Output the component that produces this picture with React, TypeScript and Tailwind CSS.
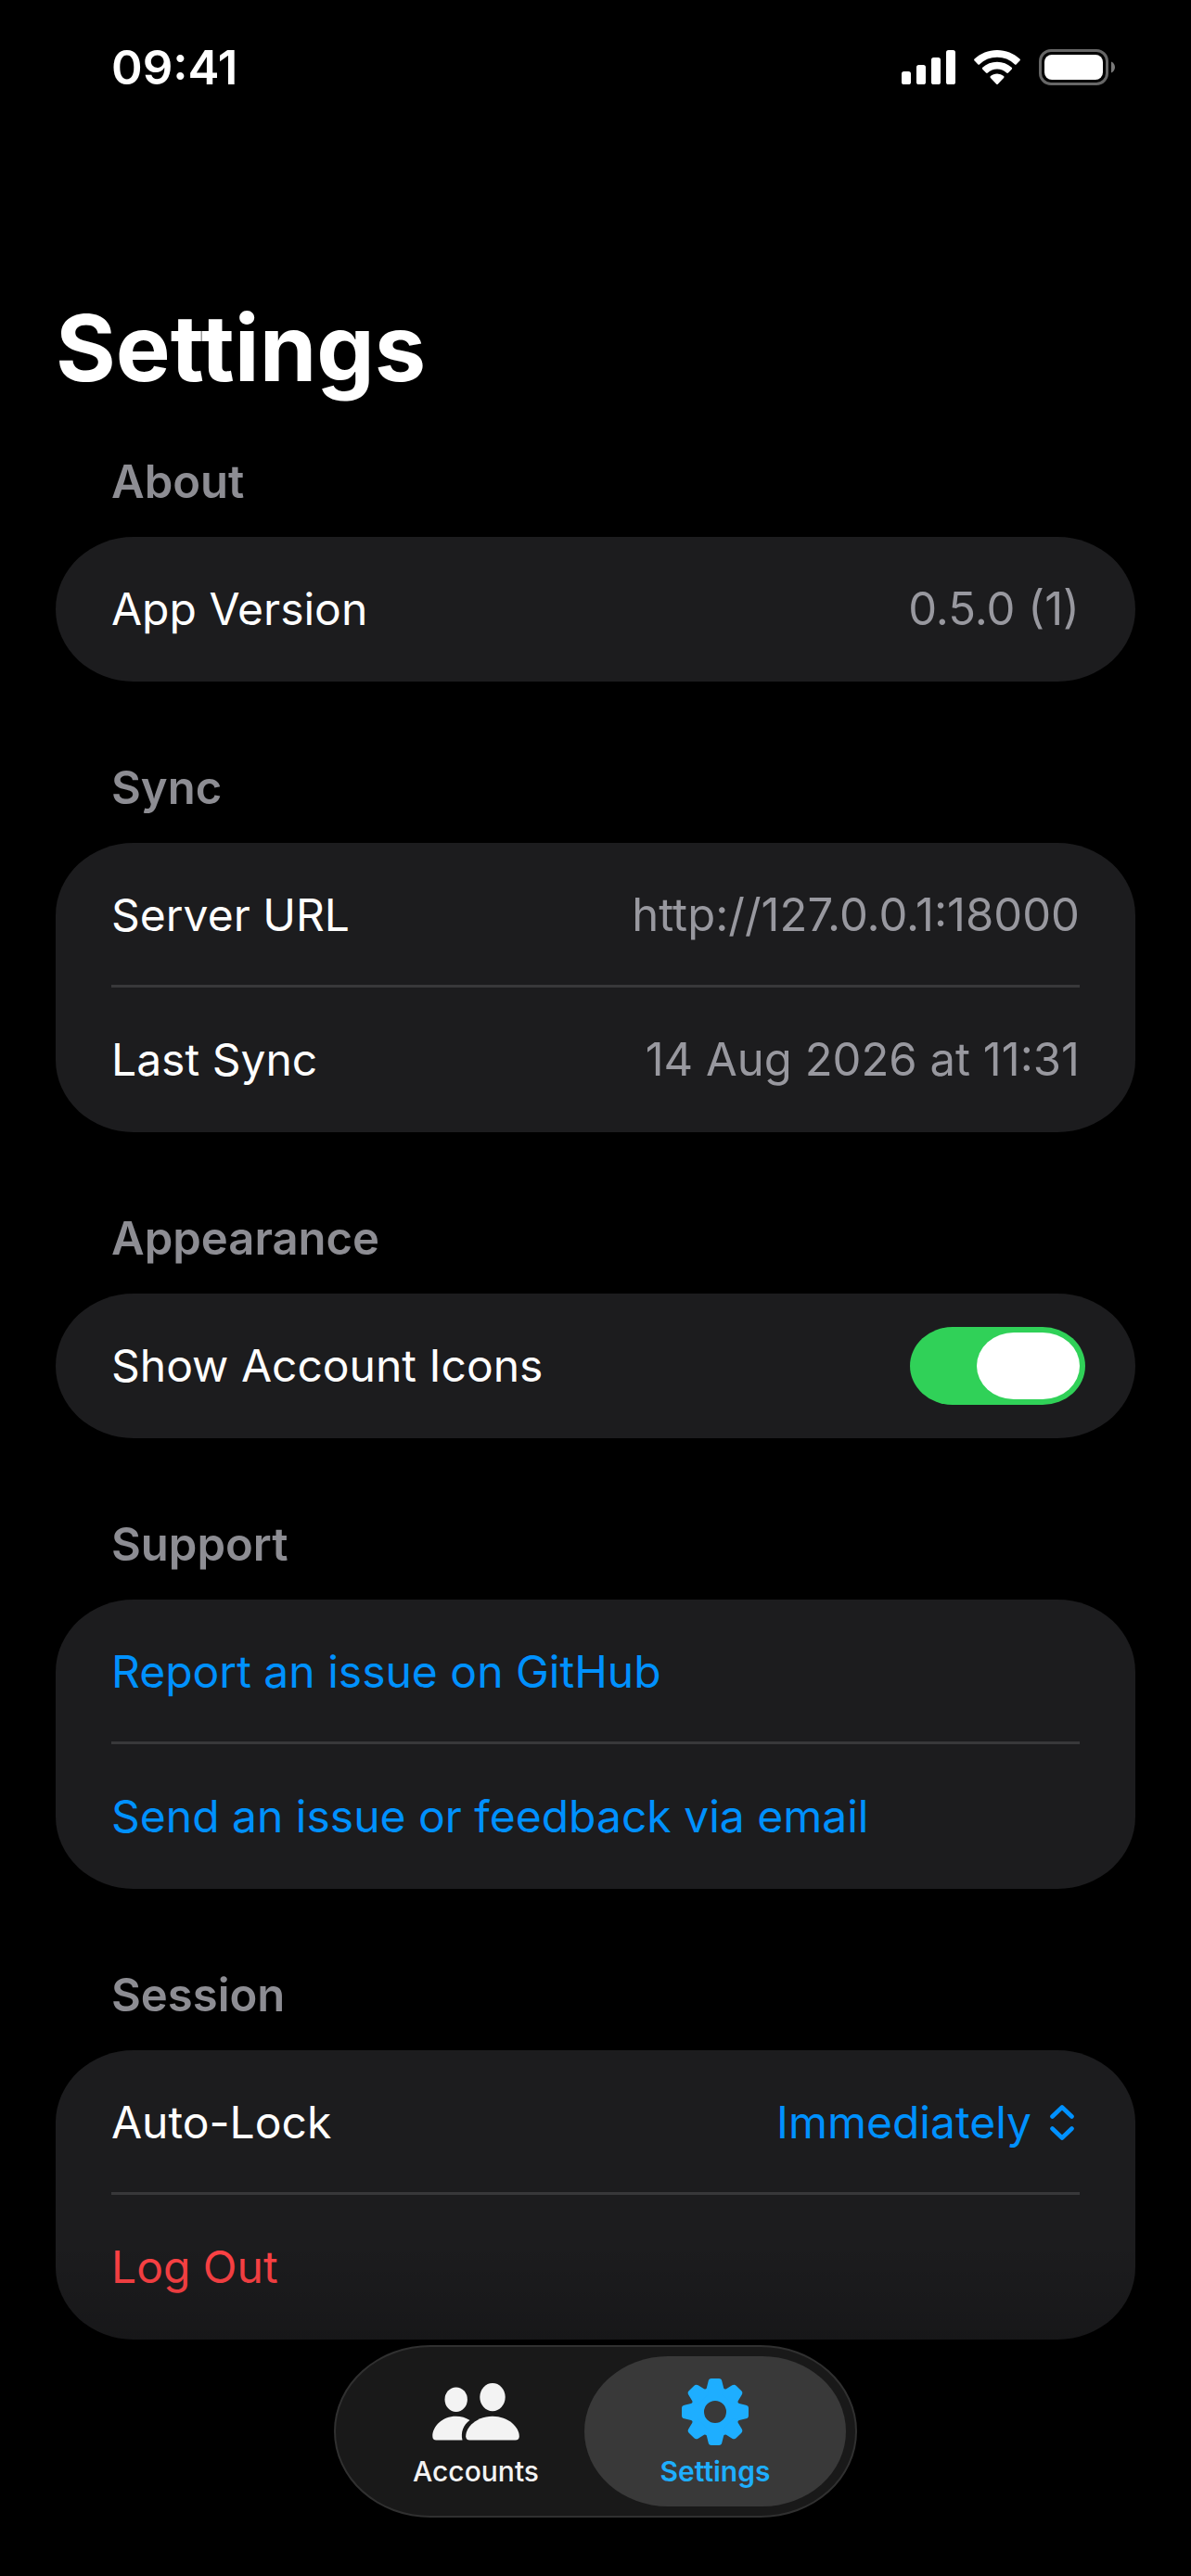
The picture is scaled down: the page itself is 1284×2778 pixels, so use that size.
import { useState, type ReactNode } from "react";

const rowClass = "mx-15 flex min-h-[156px] items-center justify-between gap-6";

function SignalIcon() {
  return (
    <svg width="58" height="38" viewBox="0 0 58 38" fill="currentColor" aria-hidden="true">
      <rect x="0" y="23" width="10" height="14" rx="2.6" />
      <rect x="16" y="16" width="10" height="21" rx="2.6" />
      <rect x="32" y="8" width="10" height="29" rx="2.6" />
      <rect x="48" y="0" width="10" height="37" rx="2.6" />
    </svg>
  );
}

function WifiIcon() {
  return (
    <svg width="50" height="38" viewBox="0 0 50 38" fill="currentColor" aria-hidden="true">
      <path d="M25 0C15.6 0 7 3.6.6 9.5a1.4 1.4 0 0 0 0 2l3.6 3.7a1.4 1.4 0 0 0 2 0A27.5 27.5 0 0 1 25 7.8a27.5 27.5 0 0 1 18.8 7.4 1.4 1.4 0 0 0 2 0l3.6-3.7a1.4 1.4 0 0 0 0-2C43 3.6 34.4 0 25 0Z" />
      <path d="M25 12.8c-6 0-11.5 2.3-15.7 6a1.4 1.4 0 0 0 0 2l3.7 3.7a1.4 1.4 0 0 0 1.9 0A15 15 0 0 1 25 20.5a15 15 0 0 1 10.1 4 1.4 1.4 0 0 0 1.9 0l3.7-3.7a1.4 1.4 0 0 0 0-2A23.5 23.5 0 0 0 25 12.8Z" />
      <path d="M25 25.6c-2.7 0-5.2.9-7.1 2.5a1.4 1.4 0 0 0 0 2l6.1 6.3a1.4 1.4 0 0 0 2 0l6.1-6.3a1.4 1.4 0 0 0 0-2A11 11 0 0 0 25 25.6Z" />
    </svg>
  );
}

function BatteryIcon() {
  return (
    <svg width="82" height="40" viewBox="0 0 82 40" aria-hidden="true">
      <rect x="1.5" y="1.5" width="72" height="36" rx="11.5" fill="none" stroke="#666" strokeWidth="3" />
      <rect x="6" y="6" width="63" height="27" rx="8" fill="#fff" />
      <path d="M78 13.5c2.6 1.2 4 3.4 4 6s-1.4 4.800-4 6Z" fill="#7a7a7a" />
    </svg>
  );
}

function PeopleIcon() {
  return (
    <svg width="94" height="62" viewBox="0 0 94 62" fill="currentColor" aria-hidden="true">
      <ellipse cx="25.7" cy="17.7" rx="12.2" ry="13.3" />
      <ellipse cx="65" cy="15.1" rx="13.700" ry="15.1" />
      <path d="M25.500 35.700C11 35.700.3 46.500.3 57.200c0 2.900 1.500 4.300 4 4.300H32.500C30.500 53 33.500 45 40.500 40 36.300 37.200 31 35.700 25.500 35.700Z" />
      <path d="M65 35.700C48 35.700 36.200 47.500 36.200 57.200c0 2.900 1.600 4.300 4.200 4.300h49.200c2.600 0 4.200-1.400 4.200-4.300C93.800 47.500 82 35.700 65 35.700Z" />
    </svg>
  );
}

const teeth = [0, 45, 90, 135, 180, 225, 270, 315];

function GearIcon() {
  return (
    <svg width="72" height="72" viewBox="0 0 72 72" fill="currentColor" aria-hidden="true">
      <circle cx="36" cy="36" r="19" fill="none" stroke="currentColor" strokeWidth="14" />
      {teeth.map((angle) => (
        <path
          key={angle}
          transform={`rotate(${angle} 36 36)`}
          d="M32 0h8c2 0 2.900 1 3.300 2.800l1.800 7.200c.4 1.500 1.500 2 3 2.500L45 17H27l-3.100-4.500c1.500-.5 2.600-1 3-2.500l1.800-7.200C29.100 1 30 0 32 0Z"
        />
      ))}
    </svg>
  );
}

function ChevronUpDownIcon() {
  return (
    <svg
      width="26"
      height="38"
      viewBox="0 0 26 38"
      fill="none"
      stroke="currentColor"
      strokeWidth="4.6"
      strokeLinecap="round"
      strokeLinejoin="round"
      aria-hidden="true"
    >
      <path d="M2.5 12.5 13 2.5l10.5 10M2.5 25.5 13 35.5l10.5-10" />
    </svg>
  );
}

function StatusBar() {
  return (
    <header className="flex h-[146px] items-center justify-between pr-[82px] pl-[120px]">
      <time className="text-[51px] leading-[60px] font-semibold">09:41</time>
      <div className="flex items-center gap-5">
        <SignalIcon />
        <WifiIcon />
        <BatteryIcon />
      </div>
    </header>
  );
}

function Section({ title, children }: { title: string; children: ReactNode }) {
  return (
    <section>
      <h2 className="mx-15 pb-[26px] text-[49px] leading-[66px] font-semibold text-[#8d8d93]">{title}</h2>
      <div className="rounded-[84px_/_78px] bg-[#1c1c1e]">{children}</div>
    </section>
  );
}

function InfoRow({ label, value }: { label: string; value: string }) {
  return (
    <div className={rowClass}>
      <span>{label}</span>
      <span className="text-[49px] text-[#98989f]">{value}</span>
    </div>
  );
}

function Divider() {
  return <hr className="mx-15 -mt-[3px] border-t-3 border-[#38383a]" />;
}

export default function App() {
  const [showIcons, setShowIcons] = useState(true);

  return (
    <div className="relative flex min-h-screen flex-col bg-black font-[Inter,sans-serif] text-[48px] leading-[60px] text-white">
      <StatusBar />
      <main className="px-15 pt-[167px]">
        <h1 className="text-[99px] leading-[124px] font-bold">Settings</h1>
        <div className="flex flex-col gap-[82px] pt-[50px]">
          <Section title="About">
            <InfoRow label="App Version" value="0.5.0 (1)" />
          </Section>
          <Section title="Sync">
            <InfoRow label="Server URL" value="http://127.0.0.1:18000" />
            <Divider />
            <InfoRow label="Last Sync" value="14 Aug 2026 at 11:31" />
          </Section>
          <Section title="Appearance">
            <label className={rowClass}>
              <span>Show Account Icons</span>
              <input
                type="checkbox"
                role="switch"
                checked={showIcons}
                onChange={(event) => setShowIcons(event.target.checked)}
                className="-mr-[6px] flex h-[84px] w-[189px] appearance-none rounded-[46px_/_42px] bg-[#39393d] p-[6px] before:h-[72px] before:w-[111px] before:rounded-[40px_/_36px] before:bg-white checked:justify-end checked:bg-[#30d158]"
              />
            </label>
          </Section>
          <Section title="Support">
            <a href="#report" className={`${rowClass} text-[#0091ff]`}>
              Report an issue on GitHub
            </a>
            <Divider />
            <a href="#feedback" className={`${rowClass} text-[#0091ff]`}>
              Send an issue or feedback via email
            </a>
          </Section>
          <Section title="Session">
            <div className={rowClass}>
              <label htmlFor="auto-lock">Auto-Lock</label>
              <div className="flex items-center gap-5 pr-[6px] text-[#0091ff]">
                <select id="auto-lock" className="appearance-none bg-transparent text-right">
                  <option>Immediately</option>
                </select>
                <ChevronUpDownIcon />
              </div>
            </div>
            <Divider />
            <div className={rowClass}>
              <button type="button" className="text-[#ff4245]">
                Log Out
              </button>
            </div>
          </Section>
        </div>
      </main>

      {/* Fades the list out behind the tab bar */}
      <div className="pointer-events-none absolute inset-x-0 bottom-0 h-[360px] bg-linear-to-b from-transparent to-black/60" />

      <nav className="absolute inset-x-0 bottom-[63px] flex justify-center text-[30px] leading-[36px] font-medium">
        <div className="flex rounded-[104px_/_93px] border-2 border-[#303030] bg-[#191919] p-[10px]">
          <a href="#accounts" className="flex h-[162px] w-[282px] flex-col items-center justify-end gap-[15px] pb-5 text-[#f3f3f3]">
            <PeopleIcon />
            Accounts
          </a>
          <a
            href="#settings"
            aria-current="page"
            className="-ml-6 flex h-[162px] w-[282px] flex-col items-center justify-end gap-[10px] rounded-[90px_/_81px] bg-[#393939] pb-5 font-semibold text-[#1eaeff]"
          >
            <GearIcon />
            Settings
          </a>
        </div>
      </nav>
    </div>
  );
}
